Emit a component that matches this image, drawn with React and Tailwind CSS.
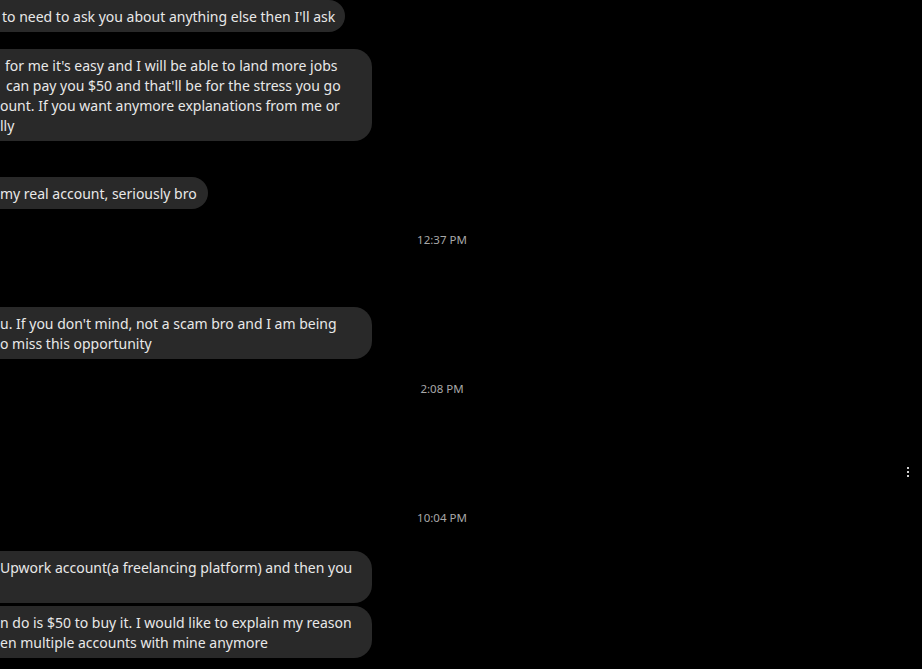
import React from 'react';

const Bubble = ({ width, lines }) => (
  <div
    className="-ml-[30px] pl-[30px] bg-[#292929] rounded-[18px] pt-[7px] pb-[5px] pr-[14px] text-[14px] leading-[20px] text-[#e8e8e8]"
    style={{ width: width + 30 }}
  >
    {lines.map((l, i) => (
      <div key={i} className="whitespace-pre" style={{ paddingLeft: l.x || 0 }}>
        {l.t || '\u00a0'}
      </div>
    ))}
  </div>
);

const Stamp = ({ children }) => (
  <div className="text-center text-[11.5px] leading-[16px] text-[#a8a8a8]">{children}</div>
);

const App = () => {
  return (
    <div
      className="w-[922px] h-[669px] bg-black overflow-hidden flex"
      style={{ fontFamily: '"Segoe UI", "Noto Sans", "Open Sans", sans-serif' }}
    >
      <div className="flex-1 flex flex-col">
        <Bubble width={345} lines={[{ t: "to need to ask you about anything else then I'll ask", x: 2 }]} />
        <div className="mt-[17px]">
          <Bubble
            width={372}
            lines={[
              { t: "for me it's easy and I will be able to land more jobs", x: 5 },
              { t: "can pay you $50 and that'll be for the stress you go", x: 6 },
              { t: 'ount. If you want anymore explanations from me or' },
              { t: 'lly' },
            ]}
          />
        </div>
        <div className="mt-[36px]">
          <Bubble width={208} lines={[{ t: 'my real account, seriously bro' }]} />
        </div>
        <div className="mt-[23px]">
          <Stamp>12:37 PM</Stamp>
        </div>
        <div className="mt-[59px]">
          <Bubble
            width={372}
            lines={[
              { t: "u. If you don't mind, not a scam bro and I am being" },
              { t: 'o miss this opportunity' },
            ]}
          />
        </div>
        <div className="mt-[22px]">
          <Stamp>2:08 PM</Stamp>
        </div>
        <div className="mt-[113px]">
          <Stamp>10:04 PM</Stamp>
        </div>
        <div className="mt-[25px] flex flex-col gap-[3px]">
          <Bubble
            width={372}
            lines={[{ t: 'Upwork account(a freelancing platform) and then you' }, { t: '' }]}
          />
          <Bubble
            width={372}
            lines={[
              { t: 'n do is $50 to buy it. I would like to explain my reason' },
              { t: 'en multiple accounts with mine anymore' },
            ]}
          />
        </div>
      </div>

      {/* message actions: vertical ellipsis */}
      <div className="w-[38px] pt-[467px] pl-[23px]">
        <div className="flex flex-col gap-[2px]">
          <span className="block w-[2px] h-[2px] bg-[#cfcfcf]" />
          <span className="block w-[2px] h-[2px] bg-[#cfcfcf]" />
          <span className="block w-[2px] h-[2px] bg-[#cfcfcf]" />
        </div>
      </div>
    </div>
  );
};

export default App;
